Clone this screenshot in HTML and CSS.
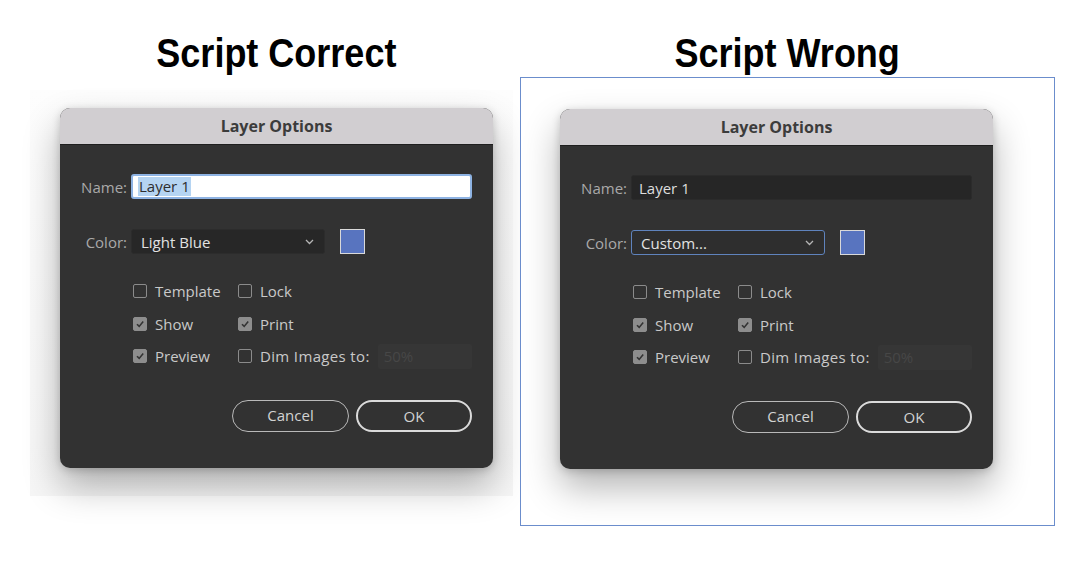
FILE: index.html
```html
<!DOCTYPE html>
<html>
<head>
<meta charset="utf-8">
<link rel="stylesheet" href="styles.css">
</head>
<body>
<div class="page">
  <section class="col col-left">
    <h1 class="heading heading-left"><span>Script Correct</span></h1>
    <div class="panel panel-left">
      <div class="dialog">
        <div class="titlebar">Layer Options</div>
        <div class="body">
          <div class="row row-name">
            <label class="lbl">Name:</label>
            <div class="input input-focus"><span class="sel">Layer 1</span></div>
          </div>
          <div class="row row-color">
            <label class="lbl">Color:</label>
            <div class="select"><span>Light Blue</span>
              <svg class="chev" width="9" height="6" viewBox="0 0 9 6"><path d="M1 1 L4.5 4.5 L8 1" fill="none" stroke="#b5b5b5" stroke-width="1.3"/></svg>
            </div>
            <div class="swatch"></div>
          </div>
          <div class="checks">
            <div class="chk"><span class="box"></span>Template</div>
            <div class="chk"><span class="box"></span>Lock</div>
            <div class="chk"><span class="box on"><svg width="10" height="10" viewBox="0 0 10 10"><path d="M2 5.2 L4.2 7.4 L8.2 2.6" fill="none" stroke="#333" stroke-width="1.6"/></svg></span>Show</div>
            <div class="chk"><span class="box on"><svg width="10" height="10" viewBox="0 0 10 10"><path d="M2 5.2 L4.2 7.4 L8.2 2.6" fill="none" stroke="#333" stroke-width="1.6"/></svg></span>Print</div>
            <div class="chk"><span class="box on"><svg width="10" height="10" viewBox="0 0 10 10"><path d="M2 5.2 L4.2 7.4 L8.2 2.6" fill="none" stroke="#333" stroke-width="1.6"/></svg></span>Preview</div>
            <div class="chk"><span class="box"></span><span class="dimlbl">Dim Images to:</span><div class="dim">50%</div></div>
          </div>
          <div class="buttons">
            <div class="btn">Cancel</div>
            <div class="btn btn-ok">OK</div>
          </div>
        </div>
      </div>
    </div>
  </section>
  <section class="col col-right">
    <h1 class="heading"><span>Script Wrong</span></h1>
    <div class="panel panel-right">
      <div class="dialog">
        <div class="titlebar">Layer Options</div>
        <div class="body">
          <div class="row row-name">
            <label class="lbl">Name:</label>
            <div class="input input-dark">Layer 1</div>
          </div>
          <div class="row row-color">
            <label class="lbl">Color:</label>
            <div class="select select-focus"><span>Custom...</span>
              <svg class="chev" width="9" height="6" viewBox="0 0 9 6"><path d="M1 1 L4.5 4.5 L8 1" fill="none" stroke="#b5b5b5" stroke-width="1.3"/></svg>
            </div>
            <div class="swatch"></div>
          </div>
          <div class="checks">
            <div class="chk"><span class="box"></span>Template</div>
            <div class="chk"><span class="box"></span>Lock</div>
            <div class="chk"><span class="box on"><svg width="10" height="10" viewBox="0 0 10 10"><path d="M2 5.2 L4.2 7.4 L8.2 2.6" fill="none" stroke="#333" stroke-width="1.6"/></svg></span>Show</div>
            <div class="chk"><span class="box on"><svg width="10" height="10" viewBox="0 0 10 10"><path d="M2 5.2 L4.2 7.4 L8.2 2.6" fill="none" stroke="#333" stroke-width="1.6"/></svg></span>Print</div>
            <div class="chk"><span class="box on"><svg width="10" height="10" viewBox="0 0 10 10"><path d="M2 5.2 L4.2 7.4 L8.2 2.6" fill="none" stroke="#333" stroke-width="1.6"/></svg></span>Preview</div>
            <div class="chk"><span class="box"></span><span class="dimlbl">Dim Images to:</span><div class="dim">50%</div></div>
          </div>
          <div class="buttons">
            <div class="btn">Cancel</div>
            <div class="btn btn-ok">OK</div>
          </div>
        </div>
      </div>
    </div>
  </section>
</div>
</body>
</html>
```
FILE: styles.css
```css
html, body {
  margin: 0;
  padding: 0;
  background: #ffffff;
}
.page {
  display: flex;
  align-items: flex-start;
  gap: 7px;
  padding: 33px 0 0 30px;
  font-family: "Open Sans", "Noto Sans", sans-serif;
}
.col {
  display: flex;
  flex-direction: column;
}
.heading {
  margin: 0;
  height: 40px;
  line-height: 40px;
  text-align: center;
  font-family: "Liberation Sans", Arial, sans-serif;
  font-weight: 700;
  font-size: 40px;
  color: #000;
}
.heading span {
  display: inline-block;
  transform: scaleX(0.9);
}
.heading-left {
  padding-left: 9px;
  margin-bottom: 17px;
}
.col-right .heading {
  margin-bottom: 4px;
}
.panel-left {
  width: 483px;
  height: 406px;
  box-sizing: border-box;
  padding: 18px 0 0 30px;
  background: linear-gradient(#fdfdfd, #f6f6f6);
}
.panel-right {
  width: 535px;
  height: 449px;
  box-sizing: border-box;
  border: 1px solid #6b8dcc;
  padding: 31px 0 0 39px;
  background: #fff;
}
.dialog {
  width: 433px;
  height: 360px;
  border-radius: 10px;
  overflow: hidden;
  background: #323232;
  box-shadow: 0 18px 36px rgba(0,0,0,0.30), 0 2px 8px rgba(0,0,0,0.18);
  display: flex;
  flex-direction: column;
}
.titlebar {
  height: 36px;
  line-height: 36px;
  background: #d1ced1;
  border-bottom: 1px solid #1f1f1f;
  text-align: center;
  font-weight: 700;
  font-size: 16px;
  color: #3c3c3c;
}
.body {
  padding: 29px 21px 0 0;
  font-size: 15px;
  font-weight: 500;
  color: #c9c9c9;
}
.row {
  display: flex;
  align-items: center;
  height: 25px;
}
.lbl {
  width: 67px;
  text-align: right;
  color: #a9a9a9;
  margin-right: 4px;
}
.input {
  flex: 1;
  height: 25px;
  box-sizing: border-box;
  border-radius: 3px;
  padding: 0 7px;
  line-height: 22px;
  display: flex;
  align-items: center;
}
.input-focus {
  background: #fff;
  border: 2px solid #8eb3e3;
  padding-left: 5px;
  color: #2e2e2e;
}
.sel {
  background: #b5d4f2;
  padding: 0 1px;
  line-height: 19px;
}
.input-dark {
  background: #262626;
  border: 1px solid #2b2b2b;
  color: #dedede;
}
.row-color {
  margin-top: 30px;
}
.select {
  width: 194px;
  height: 25px;
  box-sizing: border-box;
  background: #272727;
  border: 1px solid #2c2c2c;
  border-radius: 3px;
  padding: 0 9px;
  display: flex;
  align-items: center;
  justify-content: space-between;
  color: #e2e2e2;
}
.select-focus {
  background: #2e2e2e;
  border: 1.5px solid #5f83bd;
}
.chev {
  margin-right: 1px;
}
.swatch {
  width: 25px;
  height: 25px;
  box-sizing: border-box;
  margin-left: 15px;
  background: #5874bf;
  border: 1.5px solid #d9d9d9;
  margin-top: -1px;
}
.checks {
  margin: 21px 0 0 73px;
  display: grid;
  grid-template-columns: 105px 1fr;
  grid-auto-rows: 32.5px;
}
.chk {
  display: flex;
  align-items: center;
  color: #c9c9c9;
}
.dimlbl {
  letter-spacing: 0.35px;
}
.box {
  width: 14px;
  height: 14px;
  box-sizing: border-box;
  border: 1.5px solid #8b8b8b;
  border-radius: 2px;
  margin-right: 8px;
  display: flex;
  align-items: center;
  justify-content: center;
}
.box.on {
  background: #8d8d8d;
  border-color: #8d8d8d;
}
.dim {
  margin-left: 8px;
  flex: 1;
  height: 25px;
  background: #363636;
  border-radius: 2px;
  color: #474747;
  padding-left: 6px;
  line-height: 25px;
}
.buttons {
  margin-top: 27px;
  display: flex;
  justify-content: flex-end;
  gap: 7px;
}
.btn {
  width: 117px;
  height: 32px;
  box-sizing: border-box;
  border: 1.5px solid #b9b9b9;
  border-radius: 16px;
  text-align: center;
  line-height: 29px;
  color: #d2d2d2;
}
.btn-ok {
  width: 116px;
  border: 2px solid #dadada;
  line-height: 28px;
}
```
